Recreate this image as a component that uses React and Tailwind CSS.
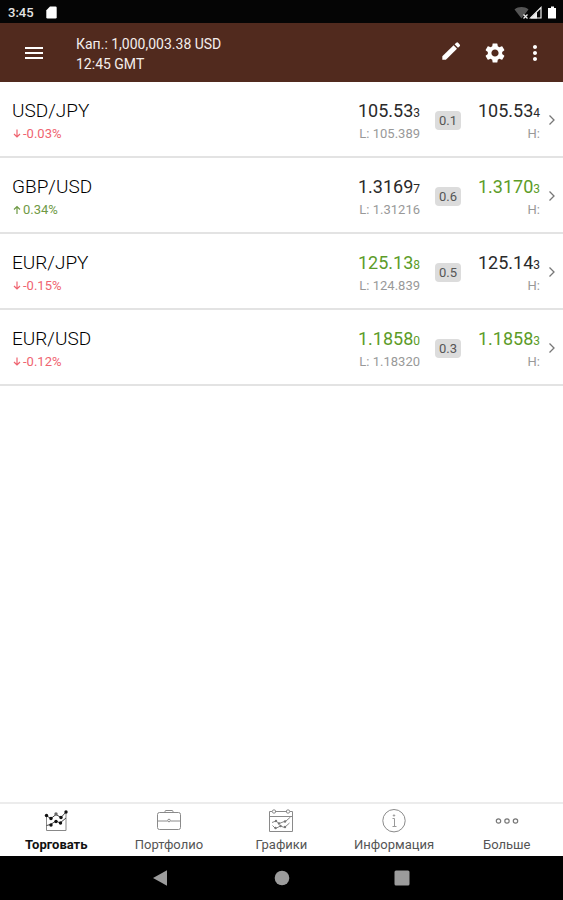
import { MdSettings, MdMoreVert, MdMenu } from 'react-icons/md'
import clsx from 'clsx'

const QUOTES = [
  { pair: 'USD/JPY', change: '-0.03%', up: false, bid: '105.53', bidPip: '3', low: '105.389', spread: '0.1', ask: '105.53', askPip: '4' },
  { pair: 'GBP/USD', change: '0.34%', up: true, bid: '1.3169', bidPip: '7', low: '1.31216', spread: '0.6', ask: '1.3170', askPip: '3', askUp: true },
  { pair: 'EUR/JPY', change: '-0.15%', up: false, bid: '125.13', bidPip: '8', bidUp: true, low: '124.839', spread: '0.5', ask: '125.14', askPip: '3' },
  { pair: 'EUR/USD', change: '-0.12%', up: false, bid: '1.1858', bidPip: '0', bidUp: true, low: '1.18320', spread: '0.3', ask: '1.1858', askPip: '3', askUp: true },
]

function PencilIcon() {
  return (
    <svg width="24" height="24" viewBox="0 0 24 24" fill="#fff">
      <path d="M3.300 15.200L14.600 4.300l3.400 3.400L6.900 18.800H3.300z" />
      <path d="M15.600 3.300L17.300 1.800a1.300 1.300 0 0 1 1.800 0l1.600 1.600a1.300 1.300 0 0 1 0 1.800L19 6.700z" />
    </svg>
  )
}

function TradeIcon() {
  return (
    <svg width="24" height="24" viewBox="0 0 24 24" fill="none" stroke="#222" strokeWidth="1">
      <path d="M2.500 6v15.500h19.500V3" stroke="#888" />
      <path d="M2 6.500l5 3 5-4 5 3 5-5.500M2.500 16.500l4-1 5.500-3.500 4 2 6-5" stroke="#444" />
      <g fill="#111" stroke="none">
        <circle cx="2.500" cy="6.500" r="1.700" /><circle cx="7" cy="9.500" r="1.700" />
        <circle cx="12" cy="5" r="1.700" fill="#666" /><circle cx="17" cy="8.500" r="1.700" />
        <circle cx="22" cy="3" r="1.700" /><circle cx="7" cy="16" r="1.700" />
        <circle cx="12" cy="12.500" r="1.700" /><circle cx="16.500" cy="14" r="1.700" />
      </g>
    </svg>
  )
}

function BriefcaseIcon() {
  return (
    <svg width="24" height="24" viewBox="0 0 24 24" fill="none" stroke="#8a8a8a" strokeWidth="1">
      <rect x="0.500" y="3.500" width="23" height="17" rx="2" />
      <path d="M8 3.500V2.500a1 1 0 0 1 1-1h6a1 1 0 0 1 1 1v1M0.500 12H10.500M13.500 12h10" />
      <circle cx="12" cy="11.500" r="1.300" />
    </svg>
  )
}

function ChartsIcon() {
  return (
    <svg width="24" height="24" viewBox="0 0 24 24" fill="none" stroke="#8a8a8a" strokeWidth="1">
      <path d="M3 2.500H0.500v20h23v-20H21M6 2.500h12M0.500 7.500h23" />
      <circle cx="5" cy="2.500" r="1.700" /><circle cx="19" cy="2.500" r="1.700" />
      <path d="M3 13.500l4-1.500 3 2.500 4-1.500 3-1 4.500-4M3.500 16.500l3 3 5-2.500 4 1.500 5-4.500" stroke="#888" />
      <g fill="#777" stroke="none">
        <circle cx="7" cy="12" r="1.200" /><circle cx="10" cy="14.500" r="1.200" /><circle cx="16" cy="12.500" r="1.200" />
        <circle cx="6.500" cy="19" r="1.200" /><circle cx="11.500" cy="17" r="1.200" /><circle cx="16" cy="18" r="1.200" />
      </g>
    </svg>
  )
}

function InfoIcon() {
  return (
    <svg width="24" height="24" viewBox="0 0 24 24" fill="none" stroke="#8a8a8a" strokeWidth="1">
      <circle cx="12" cy="11.700" r="11.200" />
      <circle cx="12" cy="6.500" r="0.700" />
      <path d="M10.500 9.500h2v7.500M10.500 17.500h4" stroke="#999" />
    </svg>
  )
}

function MoreIcon() {
  return (
    <svg width="24" height="24" viewBox="0 0 24 24" fill="none" stroke="#777" strokeWidth="1.200">
      <circle cx="3.500" cy="12" r="2.200" /><circle cx="12" cy="12" r="2.200" /><circle cx="20.500" cy="12" r="2.200" />
    </svg>
  )
}

const TABS = [
  { label: 'Торговать', icon: TradeIcon, active: true },
  { label: 'Портфолио', icon: BriefcaseIcon },
  { label: 'Графики', icon: ChartsIcon },
  { label: 'Информация', icon: InfoIcon },
  { label: 'Больше', icon: MoreIcon },
]

function StatusBar() {
  return (
    <div className="flex h-[23px] items-center justify-between bg-[#050505] pl-2 pr-1.5 pt-0.5 text-[13px] font-medium text-[#e4e4e4]">
      <div className="flex items-center gap-3">
        <span>3:45</span>
        <svg width="11" height="13" viewBox="0 0 11 13" fill="#fff">
          <path d="M4 0.500h5.500a1.200 1.200 0 0 1 1.200 1.200v9.600a1.200 1.200 0 0 1-1.200 1.200h-8A1.200 1.200 0 0 1 0.300 11.300V4.200z" />
        </svg>
      </div>
      <svg width="43" height="14" viewBox="0 0 43 14">
        <path d="M0.500 3.500C4.500 0.300 10.500 0.300 14.500 3.500L7.500 12.500z" fill="#555" />
        <path d="M9.500 8.500l4 4M13.500 8.500l-4 4" stroke="#eee" strokeWidth="1.300" />
        <path d="M16.500 12L27 1.500V12z" fill="none" stroke="#eee" strokeWidth="1.200" />
        <path d="M16.500 12.500L23 6v6.500z" fill="#eee" />
        <path d="M37 0.500h3v1.500h2v10.500h-8V2h3z" fill="#fff" />
      </svg>
    </div>
  )
}

function Header() {
  return (
    <header className="flex h-[59px] items-center bg-[#512a1e] pl-[22px] pr-4 text-white">
      <button aria-label="Menu"><MdMenu className="h-6 w-6" /></button>
      <div className="ml-[30px] flex-1 pt-0.5 text-sm leading-5 text-[#f4eeec]">
        <p>Кап.: 1,000,003.38 USD</p>
        <p>12:45 GMT</p>
      </div>
      <div className="flex items-center">
        <button aria-label="Edit" className="mr-5"><PencilIcon /></button>
        <button aria-label="Settings" className="mr-4"><MdSettings className="h-6 w-6" /></button>
        <button aria-label="Options"><MdMoreVert className="h-6 w-6" /></button>
      </div>
    </header>
  )
}

function Price({ value, pip, up, note }) {
  return (
    <div className="pt-1.5 text-right">
      <p className={clsx('text-lg leading-6', up ? 'text-[#5c9c28]' : 'text-[#2a2a2a]')}>
        {value}<span className="text-xs">{pip}</span>
      </p>
      <p className="text-[13px] leading-[22px] text-[#999]">{note}</p>
    </div>
  )
}

function QuoteRow({ quote: q }) {
  return (
    <li className="flex h-[76px] items-center border-b-2 border-[#e3e3e3] pl-3 pr-[7px]">
      <div className="flex-1 pt-1.5">
        <p className="text-[19px] font-light leading-6 text-black">{q.pair}</p>
        <p className={clsx('flex items-center text-[13px] leading-[22px]', q.up ? 'text-[#6f9a45]' : 'text-[#ef6470]')}>
          <svg className="mr-px" width="10" height="10" viewBox="0 0 10 10" fill="none" stroke="currentColor" strokeWidth="1.200">
            <path d={q.up ? 'M5 9V1.500M2 4.500L5 1.500l3 3' : 'M5 0.500v7.500M2 5l3 3 3-3'} />
          </svg>
          {q.change}
        </p>
      </div>
      <Price value={q.bid} pip={q.bidPip} up={q.bidUp} note={`L: ${q.low}`} />
      <span className="ml-[15px] mt-0.5 w-[26px] rounded-sm bg-[#dcdcdc] text-center text-[13px] leading-[19px] text-[#555]">{q.spread}</span>
      <div className="w-[79px]">
        <Price value={q.ask} pip={q.askPip} up={q.askUp} note="H:" />
      </div>
      <svg className="ml-2 mt-0.5" width="8" height="12" viewBox="0 0 8 12" fill="none" stroke="#777" strokeWidth="1.300">
        <path d="M1.500 1.500L6 6l-4.500 4.500" />
      </svg>
    </li>
  )
}

function TabBar() {
  return (
    <nav className="grid h-[54px] grid-cols-5 border-t-2 border-[#ececec] bg-white">
      {TABS.map(({ label, icon: Icon, active }) => (
        <button key={label} className="flex flex-col items-center gap-1 pt-[5px]">
          <Icon />
          <span className={clsx('text-[13px] leading-4', active ? 'font-bold text-[#111]' : 'text-[#555]')}>{label}</span>
        </button>
      ))}
    </nav>
  )
}

function SystemNav() {
  return (
    <div className="flex h-11 items-center justify-center gap-24 bg-black">
      <button aria-label="Back">
        <svg width="24" height="24" viewBox="0 0 24 24" fill="#9c9c9c"><path d="M3 12L17 4.300v15.400z" /></svg>
      </button>
      <button aria-label="Home">
        <svg width="24" height="24" viewBox="0 0 24 24" fill="#9c9c9c"><circle cx="12" cy="12" r="7.300" /></svg>
      </button>
      <button aria-label="Recent apps">
        <svg width="24" height="24" viewBox="0 0 24 24" fill="#9c9c9c"><rect x="4.500" y="4.500" width="15" height="15" rx="1.500" /></svg>
      </button>
    </div>
  )
}

export default function App() {
  return (
    <div className="flex min-h-screen flex-col bg-white font-['Roboto',sans-serif]">
      <StatusBar />
      <Header />
      <main className="flex-1">
        <ul>
          {QUOTES.map((q) => <QuoteRow key={q.pair} quote={q} />)}
        </ul>
      </main>
      <TabBar />
      <SystemNav />
    </div>
  )
}
